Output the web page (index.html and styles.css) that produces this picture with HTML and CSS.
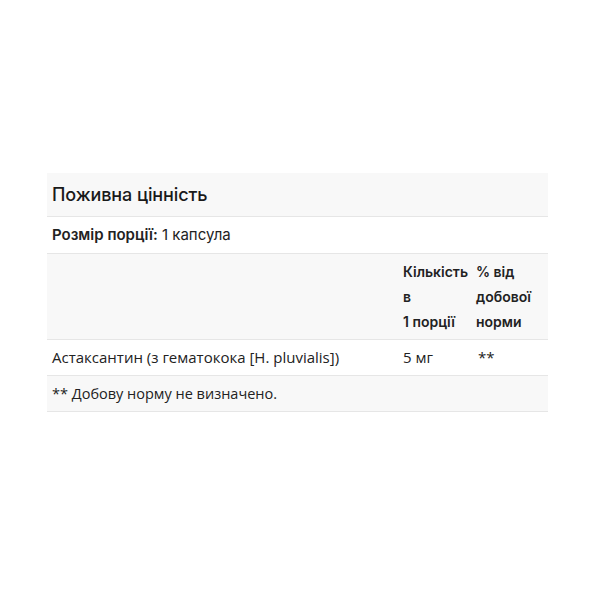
FILE: index.html
```html
<!DOCTYPE html>
<html lang="uk">
<head>
<meta charset="utf-8">
<title>Поживна цінність</title>
<link rel="stylesheet" href="styles.css">
</head>
<body>
<div class="page">
  <table class="facts">
    <colgroup>
      <col class="c-name">
      <col class="c-amount">
      <col class="c-dv">
    </colgroup>
    <thead>
      <tr class="row-title gray">
        <th colspan="3" class="title">Поживна цінність</th>
      </tr>
      <tr class="row-serving">
        <td colspan="3"><b class="strong">Розмір порції:</b> 1 капсула</td>
      </tr>
      <tr class="row-head gray">
        <th></th>
        <th class="head">Кількість в 1&nbsp;порції</th>
        <th class="head">% від добової норми</th>
      </tr>
    </thead>
    <tbody>
      <tr class="row-data">
        <td>Астаксантин (з гематокока [H. pluvialis])</td>
        <td>5 мг</td>
        <td class="stars">**</td>
      </tr>
      <tr class="row-foot gray">
        <td colspan="3">** Добову норму не визначено.</td>
      </tr>
    </tbody>
  </table>
</div>
</body>
</html>
```
FILE: styles.css
```css
html, body {
  margin: 0;
  padding: 0;
  background: #ffffff;
}

.page {
  width: 600px;
  height: 600px;
  padding-top: 173px;
  padding-left: 47px;
  box-sizing: border-box;
}

.facts {
  width: 501px;
  border-collapse: collapse;
  table-layout: fixed;
  font-family: "Open Sans", "Liberation Sans", sans-serif;
  font-size: 15px;
  color: #222222;
}

.c-name { width: 351px; }
.c-amount { width: 73px; }
.c-dv { width: 77px; }

.facts th,
.facts td {
  text-align: left;
  vertical-align: top;
  padding: 5px;
  line-height: 25px;
  border-bottom: 1px solid #e6e6e6;
}

.gray {
  background: #f8f8f8;
}

.facts .title {
  font-family: "Inter", "Liberation Sans", sans-serif;
  font-weight: 500;
  font-size: 18px;
  line-height: 33px;
  padding: 5px;
  color: #1a1a1a;
  letter-spacing: -0.1px;
}

.facts .row-serving td {
  font-family: "Inter", "Liberation Sans", sans-serif;
  font-size: 15px;
  padding-top: 5px;
  padding-bottom: 6px;
}

.strong {
  font-weight: 600;
}

.facts .head {
  font-family: "Inter", "Liberation Sans", sans-serif;
  font-weight: 600;
  font-size: 14px;
}

.facts .row-foot td {
  font-size: 14.5px;
}

.facts .stars {
  padding-left: 7px;
}
```
